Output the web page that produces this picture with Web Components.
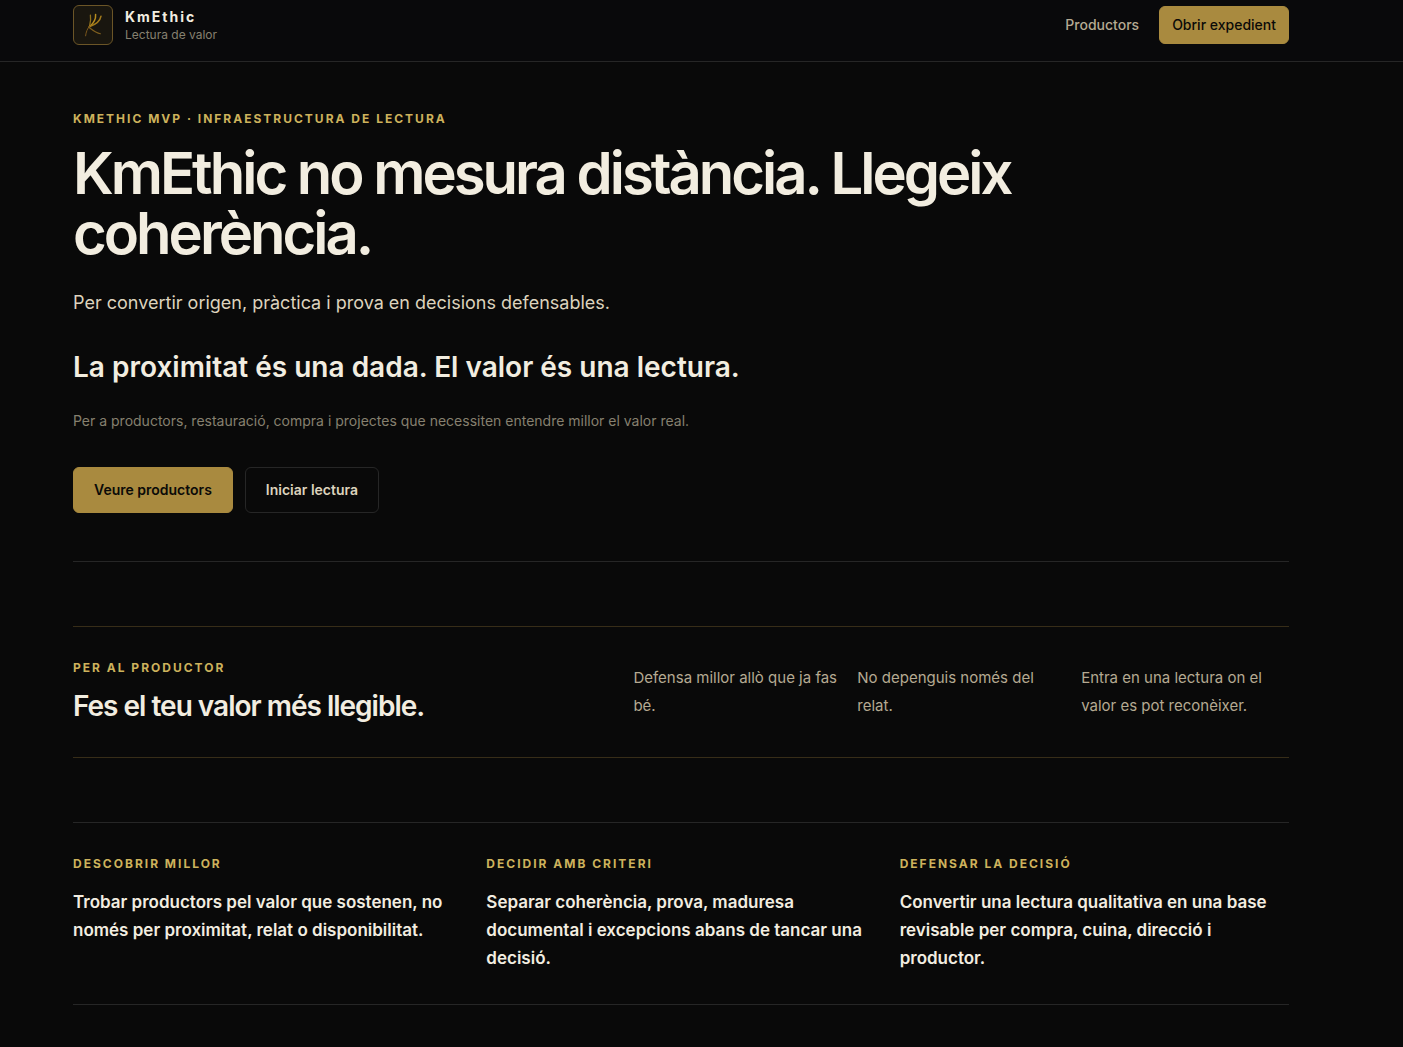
<!DOCTYPE html>
<html lang="ca">
<head>
  <meta charset="utf-8">
  <meta name="viewport" content="width=device-width, initial-scale=1">
  <title>KmEthic</title>
  <style>
    :root {
      --bg: #090909;
      --bg-header: #09090b;
      --gold: #a98a3f;
      --gold-text: #cdb25c;
      --gold-line: #372d18;
      --line: #262626;
      --ivory: #f2ede0;
      --sand: #ddd3bd;
      --muted: #b5aa92;
      --dim: #86806f;
    }

    body {
      margin: 0;
      background: var(--bg);
      color: var(--ivory);
      font-family: Inter, "Liberation Sans", sans-serif;
    }
  </style>
</head>
<body>
  <site-header></site-header>

  <page-wrap>
    <main>
      <hero-section></hero-section>
      <producer-section></producer-section>
      <value-grid>
        <value-card label="Descobrir millor">Trobar productors pel valor que sostenen, no només per proximitat, relat o disponibilitat.</value-card>
        <value-card label="Decidir amb criteri">Separar coherència, prova, maduresa documental i excepcions abans de tancar una decisió.</value-card>
        <value-card label="Defensar la decisió">Convertir una lectura qualitativa en una base revisable per compra, cuina, direcció i productor.</value-card>
      </value-grid>
    </main>
  </page-wrap>

  <script>
    class PageWrap extends HTMLElement {
      constructor() {
        super();
        this.shadowDOM = this.attachShadow({mode: "open"});
      }

      connectedCallback() {
        this.shadowDOM.innerHTML = `
        <style>
          :host {
            display: block;
            padding-right: 41px;
          }

          .inner {
            box-sizing: border-box;
            max-width: 1280px;
            margin: 0 auto;
            padding: 0 32px;
          }
        </style>
        <div class="inner"><slot></slot></div>
        `;
      }
    }

    class EyebrowLabel extends HTMLElement {
      constructor() {
        super();
        this.shadowDOM = this.attachShadow({mode: "open"});
      }

      connectedCallback() {
        this.shadowDOM.innerHTML = `
        <style>
          :host {
            display: block;
            color: var(--gold-text);
            font-size: 12px;
            font-weight: 700;
            line-height: 17px;
            letter-spacing: 2px;
            text-transform: uppercase;
          }
        </style>
        <slot></slot>
        `;
      }
    }

    class ActionButton extends HTMLElement {
      constructor() {
        super();
        this.shadowDOM = this.attachShadow({mode: "open"});
      }

      connectedCallback() {
        this.shadowDOM.innerHTML = `
        <style>
          :host {
            display: block;
          }

          button {
            display: block;
            padding: 12px 20px;
            border: 1px solid var(--gold);
            border-radius: 6px;
            background: var(--gold);
            color: #0b0a08;
            font: 600 14px/20px Inter, "Liberation Sans", sans-serif;
            cursor: pointer;
          }

          :host([size="small"]) button {
            padding: 8px 12px;
            font-weight: 500;
          }

          :host([variant="outline"]) button {
            border-color: var(--line);
            background: transparent;
            color: var(--sand);
          }
        </style>
        <button type="button"><slot></slot></button>
        `;
      }
    }

    class BrandMark extends HTMLElement {
      constructor() {
        super();
        this.shadowDOM = this.attachShadow({mode: "open"});
      }

      connectedCallback() {
        this.shadowDOM.innerHTML = `
        <style>
          :host {
            display: block;
          }

          a {
            display: flex;
            align-items: center;
            gap: 12px;
            color: inherit;
            text-decoration: none;
          }

          .logo {
            box-sizing: border-box;
            width: 40px;
            height: 40px;
            border: 1px solid #6b5527;
            border-radius: 6px;
            background: #19160f;
          }

          svg {
            display: block;
          }

          .name, .tagline {
            display: block;
          }

          .name {
            font-size: 14px;
            font-weight: 700;
            line-height: 20px;
            letter-spacing: 2px;
          }

          .tagline {
            color: var(--dim);
            font-size: 12px;
            line-height: 16px;
          }
        </style>
        <a href="#">
          <span class="logo">
            <svg width="38" height="38" viewBox="0 0 38 38" fill="none" stroke-linecap="round" aria-hidden="true">
              <path d="M16.4 9.2C17 13 16.6 16.6 15.6 20" stroke="#8f701b" stroke-width="1.3"/>
              <path d="M21.6 8.4C22 13 19.4 17.4 15.8 20.6" stroke="#b88d1e" stroke-width="1.5"/>
              <path d="M27 10.2C26.2 15 21.4 18.8 15.2 20.8" stroke="#a37b1c" stroke-width="1.5"/>
              <path d="M15.6 20.2C13.4 22.4 12 26 11.6 29.8" stroke="#7b571c" stroke-width="1"/>
              <path d="M14.8 21.2C18 23.6 21.6 26.8 26.4 27.8" stroke="#80601f" stroke-width="1.1"/>
            </svg>
          </span>
          <span>
            <span class="name">KmEthic</span>
            <span class="tagline">Lectura de valor</span>
          </span>
        </a>
        `;
      }
    }

    class SiteHeader extends HTMLElement {
      constructor() {
        super();
        this.shadowDOM = this.attachShadow({mode: "open"});
      }

      connectedCallback() {
        this.shadowDOM.innerHTML = `
        <style>
          :host {
            display: block;
            border-bottom: 1px solid var(--line);
            background: var(--bg-header);
          }

          header {
            display: flex;
            align-items: center;
            justify-content: space-between;
            padding: 5px 0 16px;
          }

          nav {
            display: flex;
            align-items: center;
            gap: 20px;
          }

          nav a {
            color: var(--muted);
            font-size: 14px;
            font-weight: 500;
            line-height: 20px;
            text-decoration: none;
          }
        </style>
        <page-wrap>
          <header>
            <brand-mark></brand-mark>
            <nav>
              <a href="#productors">Productors</a>
              <action-button size="small">Obrir expedient</action-button>
            </nav>
          </header>
        </page-wrap>
        `;
      }
    }

    class HeroSection extends HTMLElement {
      constructor() {
        super();
        this.shadowDOM = this.attachShadow({mode: "open"});
      }

      connectedCallback() {
        this.shadowDOM.innerHTML = `
        <style>
          :host {
            display: block;
            padding: 48px 0;
            border-bottom: 1px solid var(--line);
          }

          h1, h2, p {
            margin: 0;
          }

          h1 {
            max-width: 1024px;
            margin-top: 16px;
            font-size: 58px;
            font-weight: 600;
            line-height: 60px;
            letter-spacing: -3px;
          }

          .lead {
            margin-top: 24px;
            color: var(--sand);
            font-size: 18px;
            line-height: 32px;
          }

          h2 {
            margin-top: 28px;
            font-size: 28px;
            font-weight: 600;
            line-height: 40px;
          }

          .note {
            margin-top: 20px;
            color: var(--dim);
            font-size: 14px;
            line-height: 28px;
          }

          .actions {
            display: flex;
            flex-wrap: wrap;
            gap: 12px;
            margin-top: 32px;
          }
        </style>
        <eyebrow-label>KmEthic MVP · Infraestructura de lectura</eyebrow-label>
        <h1>KmEthic no mesura distància. Llegeix coherència.</h1>
        <p class="lead">Per convertir origen, pràctica i prova en decisions defensables.</p>
        <h2>La proximitat és una dada. El valor és una lectura.</h2>
        <p class="note">Per a productors, restauració, compra i projectes que necessiten entendre millor el valor real.</p>
        <div class="actions">
          <action-button>Veure productors</action-button>
          <action-button variant="outline">Iniciar lectura</action-button>
        </div>
        `;
      }
    }

    class ProducerSection extends HTMLElement {
      constructor() {
        super();
        this.shadowDOM = this.attachShadow({mode: "open"});
      }

      connectedCallback() {
        this.shadowDOM.innerHTML = `
        <style>
          :host {
            display: grid;
            grid-template-columns: 4fr 5fr;
            align-items: center;
            gap: 36px;
            margin-top: 64px;
            padding: 32px 0;
            border-top: 1px solid var(--gold-line);
            border-bottom: 1px solid var(--gold-line);
          }

          h2 {
            margin: 12px 0 0;
            font-size: 28px;
            font-weight: 600;
            line-height: 37px;
            letter-spacing: -1px;
          }

          .points {
            display: grid;
            grid-template-columns: repeat(3, 1fr);
            gap: 16px;
            color: var(--muted);
            font-size: 15px;
            line-height: 28px;
          }

          p {
            margin: 0;
          }
        </style>
        <div>
          <eyebrow-label>Per al productor</eyebrow-label>
          <h2>Fes el teu valor més llegible.</h2>
        </div>
        <div class="points">
          <p>Defensa millor allò que ja fas bé.</p>
          <p>No depenguis només del relat.</p>
          <p>Entra en una lectura on el valor es pot reconèixer.</p>
        </div>
        `;
      }
    }

    class ValueGrid extends HTMLElement {
      constructor() {
        super();
        this.shadowDOM = this.attachShadow({mode: "open"});
      }

      connectedCallback() {
        this.shadowDOM.innerHTML = `
        <style>
          :host {
            display: grid;
            grid-template-columns: repeat(3, 1fr);
            gap: 24px;
            margin: 64px 0 42px;
            padding: 32px 0;
            border-top: 1px solid var(--line);
            border-bottom: 1px solid var(--line);
          }
        </style>
        <slot></slot>
        `;
      }
    }

    class ValueCard extends HTMLElement {
      constructor() {
        super();
        this.shadowDOM = this.attachShadow({mode: "open"});
      }

      connectedCallback() {
        this.shadowDOM.innerHTML = `
        <style>
          :host {
            display: block;
          }

          p {
            margin: 16px 0 0;
            font-size: 17px;
            font-weight: 600;
            line-height: 28px;
          }
        </style>
        <eyebrow-label>${this.getAttribute("label")}</eyebrow-label>
        <p><slot></slot></p>
        `;
      }
    }

    customElements.define("page-wrap", PageWrap);
    customElements.define("eyebrow-label", EyebrowLabel);
    customElements.define("action-button", ActionButton);
    customElements.define("brand-mark", BrandMark);
    customElements.define("site-header", SiteHeader);
    customElements.define("hero-section", HeroSection);
    customElements.define("producer-section", ProducerSection);
    customElements.define("value-grid", ValueGrid);
    customElements.define("value-card", ValueCard);
  </script>
</body>
</html>
